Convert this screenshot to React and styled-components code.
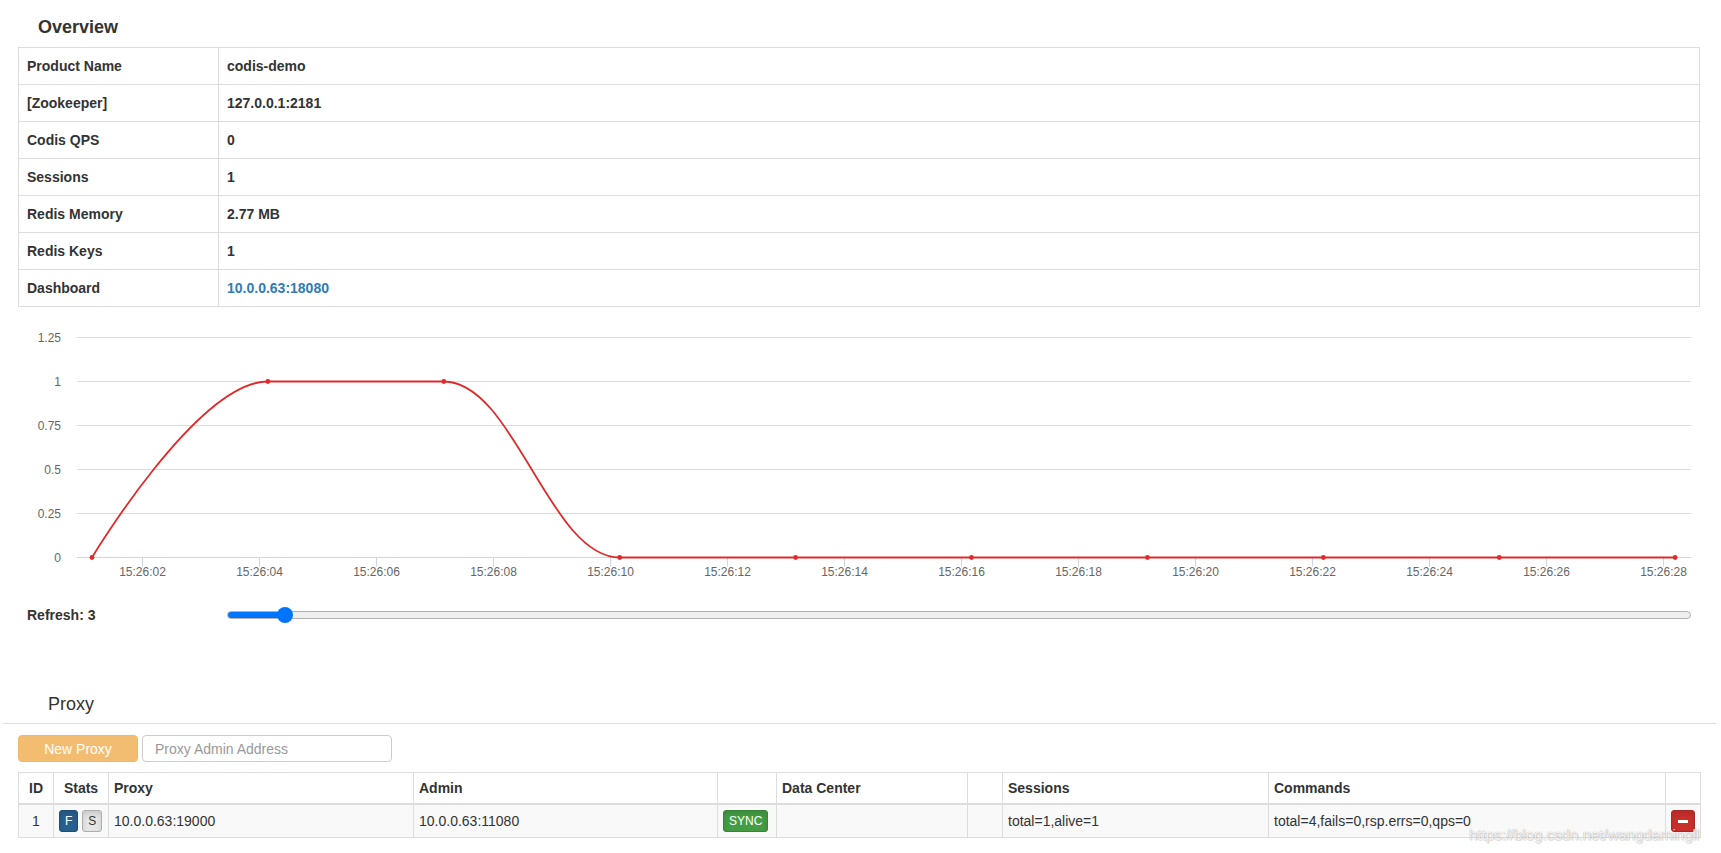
import React, { useState } from "react";
import styled, { createGlobalStyle, css } from "styled-components";

const GlobalStyle = createGlobalStyle`
  html, body { margin: 0; padding: 0; background: #fff; }
  body {
    font-family: "Liberation Sans", Arial, Helvetica, sans-serif;
    font-size: 14px;
    line-height: 20px;
    color: #333;
  }
  * { box-sizing: border-box; }
`;

const Page = styled.div`
  position: relative;
  width: 1721px;
  min-height: 853px;
  padding-top: 17px;
`;

const Section = styled.section`
  margin: 0 21px 0 18px;
`;

const SectionTitle = styled.h3`
  margin: 0 0 10px 20px;
  font-size: 18px;
  line-height: 20px;
  font-weight: 700;
  color: #333;
`;

const InfoTable = styled.table`
  width: 100%;
  border-collapse: collapse;
  table-layout: fixed;
`;

const LabelCol = styled.col`
  width: 200px;
`;

const InfoCell = styled.td`
  padding: 8px;
  border: 1px solid #ddd;
  font-weight: 700;
  line-height: 20px;
  color: #333;
`;

const InfoLink = styled.a`
  color: #337ab7;
  text-decoration: none;
  font-weight: 700;
`;

const ChartSvg = styled.svg`
  display: block;
  width: 1682px;
  height: 290px;
  font-family: "Liberation Sans", Arial, sans-serif;
`;

const RefreshRow = styled.div`
  display: grid;
  grid-template-columns: 200px 1fr;
  align-items: center;
  height: 20px;
  margin-top: 8px;
  padding: 0 9px;
`;

const RefreshLabel = styled.label`
  font-weight: 700;
  color: #333;
`;

const Range = styled.input`
  -webkit-appearance: none;
  appearance: none;
  display: block;
  width: 100%;
  height: 8px;
  margin: 0;
  border: 1px solid #b2b2b2;
  border-radius: 4px;
  outline: none;
  &::-webkit-slider-thumb {
    -webkit-appearance: none;
    appearance: none;
    width: 16px;
    height: 16px;
    border-radius: 50%;
    background: #0075ff;
    border: none;
  }
`;

const ProxyPanel = styled.section`
  margin-top: 69px;
`;

const ProxyTitle = styled.h4`
  margin: 0 0 9px 48px;
  font-size: 18px;
  line-height: 20px;
  font-weight: 400;
  color: #333;
`;

const Divider = styled.hr`
  margin: 0 5px 0 3px;
  height: 0;
  border: 0;
  border-top: 1px solid #ddd;
`;

const ProxyBody = styled.div`
  margin: 11px 21px 0 18px;
`;

const Toolbar = styled.div`
  display: flex;
  gap: 4px;
  height: 27px;
  margin-bottom: 10px;
`;

const NewProxyButton = styled.button`
  width: 120px;
  height: 27px;
  padding: 0;
  border: 1px solid #f2b866;
  border-radius: 4px;
  background: #f3bd71;
  color: #fff;
  font-family: inherit;
  font-size: 14px;
  cursor: not-allowed;
`;

const AddressInput = styled.input`
  width: 250px;
  height: 27px;
  padding: 0 12px;
  border: 1px solid #ccc;
  border-radius: 4px;
  font-family: inherit;
  font-size: 14px;
  color: #555;
  outline: none;
  &::placeholder { color: #999; }
`;

const ProxyTable = styled.table`
  width: 100%;
  border-collapse: collapse;
  table-layout: fixed;
`;

const Col = styled.col`
  width: ${(p) => p.$w}px;
`;

const HeadCell = styled.th`
  padding: 5px;
  border: 1px solid #ddd;
  border-bottom: 2px solid #ddd;
  font-weight: 700;
  line-height: 20px;
  text-align: ${(p) => (p.$center ? "center" : "left")};
  color: #333;
`;

const BodyRow = styled.tr`
  background: #f9f9f9;
`;

const BodyCell = styled.td`
  padding: 5px;
  border: 1px solid #ddd;
  line-height: 20px;
  vertical-align: middle;
  text-align: ${(p) => (p.$center ? "center" : "left")};
  color: #333;
  white-space: nowrap;
`;

const variants = {
  primary: css`
    background: #286090;
    border-color: #204d74;
    color: #fff;
  `,
  default: css`
    background: #e6e6e6;
    border-color: #adadad;
    color: #333;
  `,
  success: css`
    background: #449d44;
    border-color: #398439;
    color: #fff;
  `,
  danger: css`
    background: #c9302c;
    border-color: #ac2925;
    color: #fff;
  `,
};

const XsButton = styled.button`
  display: inline-block;
  vertical-align: middle;
  padding: 1px 5px;
  border: 1px solid;
  border-radius: 3px;
  font-family: inherit;
  font-size: 12px;
  line-height: 18px;
  box-shadow: inset 0 3px 5px rgba(0, 0, 0, 0.125);
  ${(p) => variants[p.$variant]}
`;

const MinusGlyph = styled.span`
  display: inline-block;
  width: 12px;
  height: 18px;
  vertical-align: top;
  position: relative;
  &::before {
    content: "";
    position: absolute;
    left: 1px;
    top: 8px;
    width: 10px;
    height: 3px;
    background: #fff;
  }
`;

const Watermark = styled.div`
  position: absolute;
  left: 1469px;
  top: 826px;
  font-family: "Liberation Sans", Arial, sans-serif;
  font-size: 15px;
  line-height: 18px;
  color: rgba(255, 255, 255, 0.85);
  text-shadow: 0 0 1px rgba(0, 0, 0, 0.35), 1px 1px 1px rgba(0, 0, 0, 0.12);
  pointer-events: none;
  white-space: nowrap;
`;

const overview = [
  ["Product Name", "codis-demo"],
  ["[Zookeeper]", "127.0.0.1:2181"],
  ["Codis QPS", "0"],
  ["Sessions", "1"],
  ["Redis Memory", "2.77 MB"],
  ["Redis Keys", "1"],
  ["Dashboard", "10.0.0.63:18080", true],
];

const yTicks = [
  [0, "0"],
  [0.25, "0.25"],
  [0.5, "0.5"],
  [0.75, "0.75"],
  [1, "1"],
  [1.25, "1.25"],
];

const values = [0, 1, 1, 0, 0, 0, 0, 0, 0, 0];

function Chart() {
  const yOf = (v) => 250.5 - 176 * v;
  const xOf = (i) => 74 + 175.9 * i;
  const gx0 = 59;
  const gx1 = 1673;
  const k = 70.36;
  const yT = yOf(1);
  const y0 = yOf(0);
  const d = [
    `M${xOf(0)} ${y0}`,
    `C${xOf(0)} ${y0} ${xOf(1) - k} ${yT} ${xOf(1)} ${yT}`,
    `C${xOf(1) + k} ${yT} ${xOf(2) - k} ${yT} ${xOf(2)} ${yT}`,
    `C${xOf(2) + k} ${yT} ${xOf(3) - k} ${y0} ${xOf(3)} ${y0}`,
    `L${xOf(9)} ${y0}`,
  ].join(" ");
  const labels = Array.from({ length: 14 }, (_, i) => {
    const sec = String(2 + i * 2).padStart(2, "0");
    return { x: Math.round(123.7 + 117.05 * i) + 0.5, text: `15:26:${sec}` };
  });
  return (
    <ChartSvg viewBox="0 0 1682 290">
      {yTicks.map(([v, t]) => (
        <g key={t}>
          {v !== 0 && (
            <line x1={gx0} x2={gx1} y1={yOf(v)} y2={yOf(v)} stroke="#dcdcdc" strokeWidth="1" />
          )}
          <text x="43" y={yOf(v) + 4} textAnchor="end" fontSize="12" fill="#666">
            {t}
          </text>
        </g>
      ))}
      <line x1={gx0} x2={gx1} y1={y0} y2={y0} stroke="#ccd6eb" strokeWidth="1" />
      {labels.map((l) => (
        <g key={l.text}>
          <line x1={l.x} x2={l.x} y1={y0} y2={y0 + 9} stroke="#ccd6eb" strokeWidth="1" />
          <text x={l.x} y="269" textAnchor="middle" fontSize="12" fill="#666">
            {l.text}
          </text>
        </g>
      ))}
      <path d={d} fill="none" stroke="#df2b2b" strokeWidth="1.8" />
      {values.map((v, i) => (
        <circle key={i} cx={xOf(i)} cy={yOf(v)} r="2.4" fill="#df2b2b" />
      ))}
    </ChartSvg>
  );
}

export default function App() {
  const [refresh, setRefresh] = useState(3);
  const min = 1;
  const max = 60;
  const width = 1464;
  const stop = ((8 + (width - 16) * ((refresh - min) / (max - min))) / width) * 100;

  return (
    <Page>
      <GlobalStyle />
      <Section>
        <SectionTitle>Overview</SectionTitle>
        <InfoTable>
          <colgroup>
            <LabelCol />
            <col />
          </colgroup>
          <tbody>
            {overview.map(([k, v, link]) => (
              <tr key={k}>
                <InfoCell>{k}</InfoCell>
                <InfoCell>{link ? <InfoLink href="#">{v}</InfoLink> : v}</InfoCell>
              </tr>
            ))}
          </tbody>
        </InfoTable>
        <Chart />
        <RefreshRow>
          <RefreshLabel>Refresh: {refresh}</RefreshLabel>
          <Range
            type="range"
            min={min}
            max={max}
            value={refresh}
            onChange={(e) => setRefresh(Number(e.target.value))}
            style={{
              background: `linear-gradient(to right, #0075ff 0%, #0075ff ${stop}%, #efefef ${stop}%, #efefef 100%)`,
            }}
          />
        </RefreshRow>
      </Section>

      <ProxyPanel>
        <ProxyTitle>Proxy</ProxyTitle>
        <Divider />
        <ProxyBody>
          <Toolbar>
            <NewProxyButton disabled>New Proxy</NewProxyButton>
            <AddressInput placeholder="Proxy Admin Address" />
          </Toolbar>
          <ProxyTable>
            <colgroup>
              <Col $w={35} />
              <Col $w={55} />
              <Col $w={305} />
              <Col $w={304} />
              <Col $w={59} />
              <Col $w={191} />
              <Col $w={35} />
              <Col $w={266} />
              <Col $w={397} />
              <Col $w={35} />
            </colgroup>
            <thead>
              <tr>
                <HeadCell $center>ID</HeadCell>
                <HeadCell $center>Stats</HeadCell>
                <HeadCell>Proxy</HeadCell>
                <HeadCell>Admin</HeadCell>
                <HeadCell />
                <HeadCell>Data Center</HeadCell>
                <HeadCell />
                <HeadCell>Sessions</HeadCell>
                <HeadCell>Commands</HeadCell>
                <HeadCell />
              </tr>
            </thead>
            <tbody>
              <BodyRow>
                <BodyCell $center>1</BodyCell>
                <BodyCell>
                  <XsButton $variant="primary">F</XsButton>{" "}
                  <XsButton $variant="default">S</XsButton>
                </BodyCell>
                <BodyCell>10.0.0.63:19000</BodyCell>
                <BodyCell>10.0.0.63:11080</BodyCell>
                <BodyCell>
                  <XsButton $variant="success">SYNC</XsButton>
                </BodyCell>
                <BodyCell />
                <BodyCell />
                <BodyCell>total=1,alive=1</BodyCell>
                <BodyCell>total=4,fails=0,rsp.errs=0,qps=0</BodyCell>
                <BodyCell>
                  <XsButton $variant="danger" aria-label="remove">
                    <MinusGlyph />
                  </XsButton>
                </BodyCell>
              </BodyRow>
            </tbody>
          </ProxyTable>
        </ProxyBody>
      </ProxyPanel>
      <Watermark>https://blog.csdn.net/wangdamingll</Watermark>
    </Page>
  );
}
